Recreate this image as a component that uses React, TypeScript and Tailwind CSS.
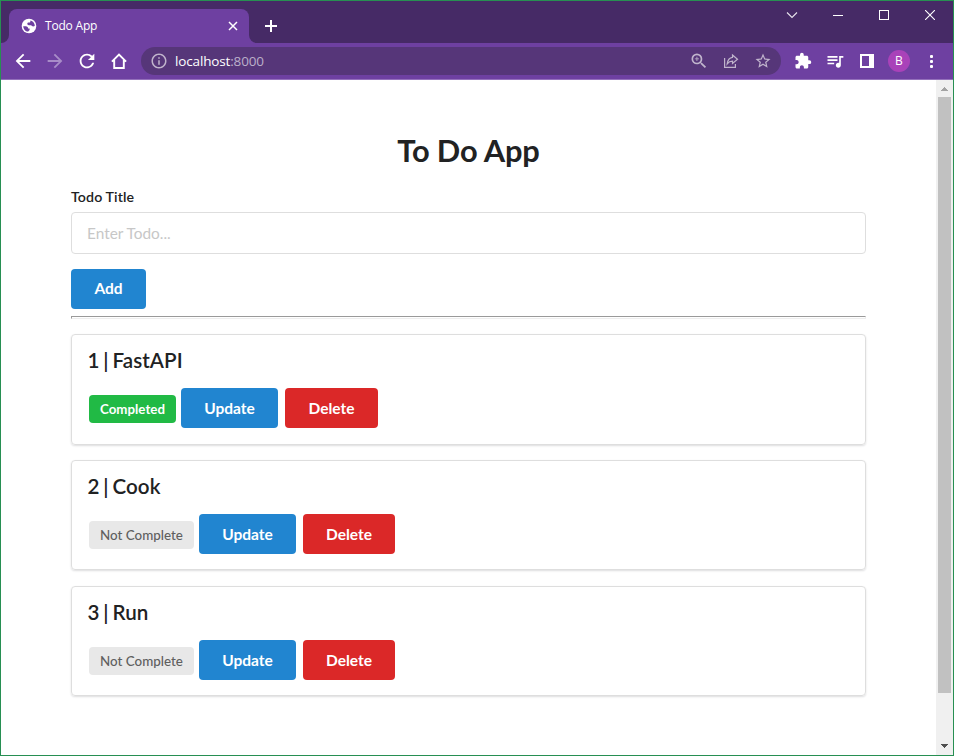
import type { ReactNode } from "react";
import {
  MdArrowBack,
  MdArrowForward,
  MdExtension,
  MdInfoOutline,
  MdQueueMusic,
  MdRefresh,
  MdStarBorder,
  MdZoomIn,
} from "react-icons/md";

type Todo = { id: number; title: string; complete: boolean };

const todos: Todo[] = [
  { id: 1, title: "FastAPI", complete: true },
  { id: 2, title: "Cook", complete: false },
  { id: 3, title: "Run", complete: false },
];

function Slot({ children }: { children: ReactNode }) {
  return <div className="flex h-7 w-8 shrink-0 items-center justify-center">{children}</div>;
}

function GlobeIcon() {
  return (
    <svg className="size-4" viewBox="0 0 16 16">
      <circle cx="8" cy="8" r="7.300" fill="#fff" />
      <path
        d="M2.200 8.200l2.600.1c1.600 0 2.300 1 2.300 2.200l1.500.1v1.300l-1.400 1.700C4.500 13.500 2.400 11.200 2.200 8.200z"
        fill="#6e40a1"
      />
      <path
        d="M9.500 2.400c2.600.7 4.400 3 4.300 5.700l-1.700.3c-.8 0-1.300-.6-1.900-1.200H7.800c-1 0-1.500-.6-1.500-1.400 0-.9.6-1.300 1.500-1.300h.9c.8 0 .5-1.500.8-2.100z"
        fill="#6e40a1"
      />
    </svg>
  );
}

function TitleBar() {
  return (
    <div className="flex h-[42px] shrink-0 bg-[#462a66]">
      <div className="flex w-2 items-end bg-[#462a66]">
        <div className="size-2 bg-[#6e40a1]">
          <div className="size-2 rounded-br-lg bg-[#462a66]" />
        </div>
      </div>
      <div className="mt-2 flex h-[34px] w-60 items-center rounded-t-lg bg-[#6e40a1] pr-[10px] pl-3">
        <GlobeIcon />
        <span className="ml-2 flex-1 text-[12px] tracking-[-0.2px] text-white">Todo App</span>
        <svg className="size-3" viewBox="0 0 12 12" stroke="#fff" strokeWidth="1.5">
          <path d="M2 2l8 8M10 2l-8 8" />
        </svg>
      </div>
      <div className="flex w-2 items-end">
        <div className="size-2 bg-[#6e40a1]">
          <div className="size-2 rounded-bl-lg bg-[#462a66]" />
        </div>
      </div>
      <svg className="mt-[19px] ml-2 size-3" viewBox="0 0 12 12" stroke="#fff" strokeWidth="2">
        <path d="M6 0v12M0 6h12" />
      </svg>
      <div className="flex-1" />
      <div className="flex h-7 items-center">
        <div className="flex w-[46px] justify-center">
          <svg width="12" height="8" viewBox="0 0 12 8" fill="none" stroke="#e8e4ed" strokeWidth="1.1">
            <path d="M1 1.5l5 5 5-5" />
          </svg>
        </div>
        <div className="flex w-[46px] justify-center">
          <div className="h-px w-[10px] bg-white" />
        </div>
        <div className="flex w-[46px] justify-center">
          <div className="size-[10px] border border-white" />
        </div>
        <div className="flex w-[46px] justify-center">
          <svg width="10" height="10" viewBox="0 0 10 10" stroke="#fff" strokeWidth="1.1">
            <path d="M0 0l10 10M10 0L0 10" />
          </svg>
        </div>
      </div>
    </div>
  );
}

function Toolbar() {
  return (
    <div className="flex h-[37px] shrink-0 items-start border-b border-[#9470bb] bg-[#6e40a1] pt-1 pl-1.5 text-white">
      <Slot>
        <MdArrowBack className="size-[22px]" />
      </Slot>
      <Slot>
        <MdArrowForward className="size-[22px] text-[#a88cc8]" />
      </Slot>
      <Slot>
        <MdRefresh className="size-[22px]" />
      </Slot>
      <Slot>
        <svg width="16" height="16" viewBox="0 0 16 16" fill="none" stroke="#fff" strokeWidth="1.9">
          <path d="M.9 8.600L8 1.500l7.100 7.100M3.200 7v8h9.600V7" />
        </svg>
      </Slot>
      <div className="ml-1.5 flex h-7 w-[640px] items-center rounded-full bg-[#563679] pr-0.5 pl-[2px] text-[#c0b4cc]">
        <Slot>
          <MdInfoOutline className="size-[18px]" />
        </Slot>
        <span className="flex-1 pt-px text-[13.500px] tracking-[-0.150px] text-white">
          localhost<span className="text-[#bbafca]">:8000</span>
        </span>
        <Slot>
          <MdZoomIn className="size-5" />
        </Slot>
        <Slot>
          <svg width="16" height="16" viewBox="0 0 16 16" fill="none" stroke="currentColor" strokeWidth="1.2">
            <path d="M1.600 5v9.400h10.800V11" />
            <path d="M9.500 2l5 4.200-5 4.300V8.200C7.200 8.200 5.600 9 4.200 10.800 4.700 7 6.500 4.800 9.500 4.400z" />
          </svg>
        </Slot>
        <Slot>
          <MdStarBorder className="size-[18px]" />
        </Slot>
      </div>
      <div className="ml-1.5 flex">
        <Slot>
          <MdExtension className="size-[18px]" />
        </Slot>
        <Slot>
          <MdQueueMusic className="size-5" />
        </Slot>
        <Slot>
          <div className="h-[14px] w-[14px] border-2 border-r-[5px] border-white" />
        </Slot>
        <Slot>
          <div className="flex size-[22px] items-center justify-center rounded-full bg-[#a942b9] text-[12px]">B</div>
        </Slot>
        <Slot>
          <div className="flex flex-col gap-0.5">
            <div className="size-[3px] rounded-[1px] bg-white" />
            <div className="size-[3px] rounded-[1px] bg-white" />
            <div className="size-[3px] rounded-[1px] bg-white" />
          </div>
        </Slot>
      </div>
    </div>
  );
}

function Scrollbar() {
  return (
    <div className="flex w-[17px] shrink-0 flex-col items-center bg-[#f0f0f0]">
      <svg className="shrink-0" width="17" height="17" viewBox="0 0 17 17" shapeRendering="crispEdges">
        <path d="M5 11h7L8.500 7z" fill="#a3a3a3" />
      </svg>
      <div className="h-[596px] w-[13px] bg-[#c1c1c1]" />
      <div className="flex-1" />
      <svg className="shrink-0" width="17" height="17" viewBox="0 0 17 17" shapeRendering="crispEdges">
        <path d="M5 6h7l-3.500 4z" fill="#505050" />
      </svg>
    </div>
  );
}

function TodoCard({ todo }: { todo: Todo }) {
  return (
    <section className="h-[111px] rounded-[4px] border border-[#dedede] pt-3 pl-4 shadow-[0_1px_2px_0_rgba(34,36,38,0.15)] not-first:h-[110px]">
      <h2 className="-ml-[0.5px] text-[20.600px] leading-[26px] font-semibold tracking-[0.1px] [word-spacing:-1.500px]">
        {todo.id} | {todo.title}
      </h2>
      <div className="mt-[15px] flex h-10 text-[15.500px] font-bold text-white">
        {todo.complete ? (
          <span className="mt-[7px] ml-px flex h-7 w-[87px] items-center justify-center rounded-[4px] bg-[#21ba45] pt-px text-[13.300px]">
            Completed
          </span>
        ) : (
          <span className="mt-[7px] ml-px flex h-7 w-[105px] items-center justify-center rounded-[4px] bg-[#e8e8e8] pt-px text-[13.400px] font-medium text-[#5f5f5f]">
            Not Complete
          </span>
        )}
        <button className="ml-[5px] h-10 w-[97px] rounded-[4px] bg-[#2185d0] pt-0.5">Update</button>
        <button
          className={
            todo.complete
              ? "ml-[7px] h-10 w-[93px] rounded-[4px] bg-[#db2828] pt-0.5"
              : "ml-[7px] h-10 w-[92px] rounded-[4px] bg-[#db2828] pt-0.5"
          }
        >
          Delete
        </button>
      </div>
    </section>
  );
}

export default function App() {
  return (
    <div className="flex h-[756px] w-[954px] flex-col overflow-hidden border border-[#278f52] bg-white font-['Open_Sans',sans-serif]">
      <TitleBar />
      <Toolbar />
      <div className="flex min-h-0 flex-1">
        <main className="min-w-0 flex-1 px-[70px] pt-[50px] font-[Lato,sans-serif] text-[#212223]">
          <h1 className="text-center text-[30.800px] leading-[42px] font-bold tracking-[-0.15px]">To Do App</h1>
          <label className="mt-[15px] block text-[14.2px] leading-5 font-semibold tracking-[0.1px]">Todo Title</label>
          <input
            className="mt-[5px] block h-[42px] w-full rounded-[4px] border border-[#dedede] px-[15px] text-[15.4px] outline-none placeholder:text-[#c7c7c7]"
            placeholder="Enter Todo..."
          />
          <button className="mt-[15px] block h-10 w-[75px] rounded-[4px] bg-[#2185d0] text-[15.500px] font-bold text-white">
            Add
          </button>
          <hr className="mt-[7px] h-[3px] border border-t-[#9a9a9a] border-r-[#eeeeee] border-b-[#eeeeee] border-l-[#9a9a9a]" />
          <div className="mt-[15px] grid auto-rows-[111px] gap-[15px]">
            {todos.map((todo) => (
              <TodoCard key={todo.id} todo={todo} />
            ))}
          </div>
        </main>
        <Scrollbar />
      </div>
    </div>
  );
}
